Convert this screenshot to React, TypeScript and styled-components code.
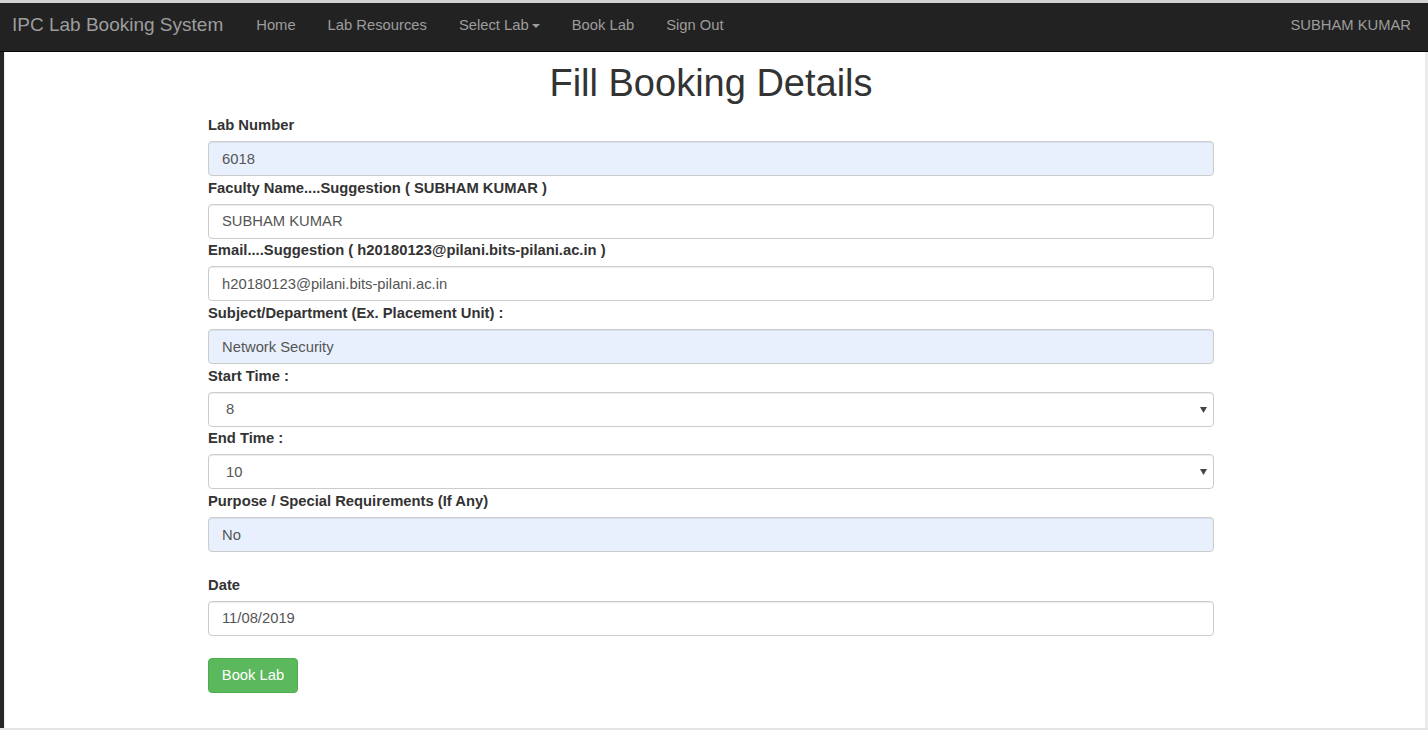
import React from "react";
import styled, { createGlobalStyle } from "styled-components";

const Global = createGlobalStyle`
  html, body { margin: 0; padding: 0; background: #fff; overflow: hidden; }
  body { font-family: "Liberation Sans", Arial, sans-serif; }
  * { box-sizing: border-box; }
`;

const Window = styled.div`
  width: 1428px;
  height: 730px;
  display: flex;
  flex-direction: column;
  border-top: 3px solid #d2d2d2;
  border-bottom: 2px solid #e4e4e4;
  background: #fff;
`;

const Navbar = styled.nav`
  height: 49px;
  flex: none;
  display: flex;
  align-items: center;
  background: #222;
  border-bottom: 1px solid #080808;
  padding: 0 17px 4px 12px;
`;

const Brand = styled.a`
  font-size: 19px;
  color: #9d9d9d;
  text-decoration: none;
  margin-right: 17px;
  white-space: nowrap;
`;

const NavLink = styled.a`
  font-size: 14.77px;
  color: #9d9d9d;
  text-decoration: none;
  padding: 0 16px;
  white-space: nowrap;
  display: flex;
  align-items: center;
`;

const Caret = styled.span`
  display: inline-block;
  width: 0;
  height: 0;
  margin-left: 3px;
  margin-top: 1px;
  border-top: 4px solid #9d9d9d;
  border-left: 4px solid transparent;
  border-right: 4px solid transparent;
`;

const Spacer = styled.div`
  flex: 1;
`;

const UserName = styled.span`
  font-size: 14.77px;
  color: #9d9d9d;
  white-space: nowrap;
`;

const Body = styled.div`
  flex: 1;
  display: flex;
  min-height: 0;
`;

const LeftStrip = styled.div`
  width: 5px;
  flex: none;
  border-left: 4px solid #262626;
  background: #ececec;
`;

const RightStrip = styled.div`
  width: 3px;
  flex: none;
  background: #ebebeb;
`;

const Main = styled.main`
  flex: 1;
  padding: 10px 0 0 203px;
`;

const FormColumn = styled.div`
  width: 1006px;
  display: flex;
  flex-direction: column;
`;

const Title = styled.h1`
  margin: 0 0 11px;
  font-size: 38px;
  line-height: 42px;
  font-weight: 400;
  color: #333;
  text-align: center;
`;

const Group = styled.div<{ $extraTop?: number }>`
  display: flex;
  flex-direction: column;
  margin-top: ${(p) => p.$extraTop ?? 0}px;
  margin-bottom: 1.7px;
`;

const Label = styled.label`
  font-size: 14.77px;
  line-height: 20px;
  font-weight: 700;
  color: #333;
  margin-bottom: 6px;
`;

const Input = styled.input<{ $autofill?: boolean }>`
  height: 35px;
  width: 100%;
  padding: 0 13px;
  font-family: "Liberation Sans", Arial, sans-serif;
  font-size: 14.77px;
  color: #555;
  background: ${(p) => (p.$autofill ? "#e8f0fe" : "#fff")};
  border: 1px solid #ccc;
  border-radius: 4px;
  box-shadow: inset 0 1px 1px rgba(0, 0, 0, 0.075);
  outline: none;
`;

const SelectWrap = styled.div`
  position: relative;
  height: 35px;
`;

const Select = styled.select`
  appearance: none;
  -webkit-appearance: none;
  height: 35px;
  width: 100%;
  padding: 0 13px 0 17px;
  font-family: "Liberation Sans", Arial, sans-serif;
  font-size: 14.77px;
  color: #555;
  background: #fff;
  border: 1px solid #ccc;
  border-radius: 4px;
  box-shadow: inset 0 1px 1px rgba(0, 0, 0, 0.075);
  outline: none;
`;

const SelectArrow = styled.svg`
  position: absolute;
  right: 7px;
  top: 15px;
  pointer-events: none;
`;

const Button = styled.button`
  margin-top: 20px;
  align-self: flex-start;
  height: 35px;
  padding: 0 12.8px;
  font-family: "Liberation Sans", Arial, sans-serif;
  font-size: 14.77px;
  color: #fff;
  background: #5cb85c;
  border: 1px solid #4cae4c;
  border-radius: 4px;
  cursor: pointer;
`;

function Field({
  label,
  value,
  autofill,
  extraTop,
}: {
  label: string;
  value: string;
  autofill?: boolean;
  extraTop?: number;
}) {
  return (
    <Group $extraTop={extraTop}>
      <Label>{label}</Label>
      <Input value={value} readOnly $autofill={autofill} />
    </Group>
  );
}

function SelectField({ label, value, options }: { label: string; value: string; options: string[] }) {
  return (
    <Group>
      <Label>{label}</Label>
      <SelectWrap>
        <Select value={value} onChange={() => {}}>
          {options.map((o) => (
            <option key={o} value={o}>
              {o}
            </option>
          ))}
        </Select>
        <SelectArrow width="7" height="6" viewBox="0 0 7 6">
          <path d="M0 0 L7 0 L3.5 6 Z" fill="#444" />
        </SelectArrow>
      </SelectWrap>
    </Group>
  );
}

const hours = ["8", "9", "10", "11", "12", "13", "14", "15", "16", "17", "18"];

export default function App() {
  return (
    <>
      <Global />
      <Window>
        <Navbar>
          <Brand href="#">IPC Lab Booking System</Brand>
          <NavLink href="#">Home</NavLink>
          <NavLink href="#">Lab Resources</NavLink>
          <NavLink href="#">
            Select Lab
            <Caret />
          </NavLink>
          <NavLink href="#">Book Lab</NavLink>
          <NavLink href="#">Sign Out</NavLink>
          <Spacer />
          <UserName>SUBHAM KUMAR</UserName>
        </Navbar>
        <Body>
          <LeftStrip />
          <Main>
            <FormColumn>
              <Title>Fill Booking Details</Title>
              <Field label="Lab Number" value="6018" autofill />
              <Field label="Faculty Name....Suggestion ( SUBHAM KUMAR )" value="SUBHAM KUMAR" />
              <Field
                label="Email....Suggestion ( h20180123@pilani.bits-pilani.ac.in )"
                value="h20180123@pilani.bits-pilani.ac.in"
              />
              <Field label="Subject/Department (Ex. Placement Unit) :" value="Network Security" autofill />
              <SelectField label="Start Time :" value="8" options={hours} />
              <SelectField label="End Time :" value="10" options={hours} />
              <Field label="Purpose / Special Requirements (If Any)" value="No" autofill />
              <Field label="Date" value="11/08/2019" extraTop={21} />
              <Button type="button">Book Lab</Button>
            </FormColumn>
          </Main>
          <RightStrip />
        </Body>
      </Window>
    </>
  );
}
